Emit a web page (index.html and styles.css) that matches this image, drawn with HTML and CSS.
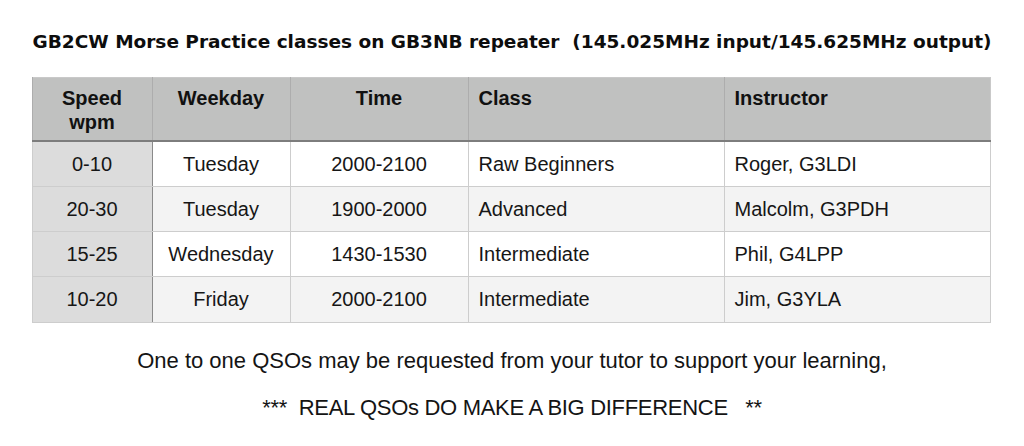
FILE: index.html
```html
<!DOCTYPE html>
<html lang="en">
<head>
<meta charset="utf-8">
<title>GB2CW Morse Practice classes</title>
<link rel="stylesheet" href="styles.css">
</head>
<body>
<main class="page">
  <h1 class="title">GB2CW Morse Practice classes on GB3NB repeater&nbsp; (145.025MHz input/145.625MHz output)</h1>
  <table class="schedule">
    <colgroup>
      <col class="c-speed">
      <col class="c-day">
      <col class="c-time">
      <col class="c-class">
      <col class="c-inst">
    </colgroup>
    <thead>
      <tr>
        <th class="ctr">Speed<br>wpm</th>
        <th class="ctr">Weekday</th>
        <th class="ctr">Time</th>
        <th>Class</th>
        <th>Instructor</th>
      </tr>
    </thead>
    <tbody>
      <tr>
        <td class="speed">0-10</td>
        <td class="ctr">Tuesday</td>
        <td class="ctr">2000-2100</td>
        <td>Raw Beginners</td>
        <td>Roger, G3LDI</td>
      </tr>
      <tr class="alt">
        <td class="speed">20-30</td>
        <td class="ctr">Tuesday</td>
        <td class="ctr">1900-2000</td>
        <td>Advanced</td>
        <td>Malcolm, G3PDH</td>
      </tr>
      <tr>
        <td class="speed">15-25</td>
        <td class="ctr">Wednesday</td>
        <td class="ctr">1430-1530</td>
        <td>Intermediate</td>
        <td>Phil, G4LPP</td>
      </tr>
      <tr class="alt">
        <td class="speed">10-20</td>
        <td class="ctr">Friday</td>
        <td class="ctr">2000-2100</td>
        <td>Intermediate</td>
        <td>Jim, G3YLA</td>
      </tr>
    </tbody>
  </table>
  <p class="note first">One to one QSOs may be requested from your tutor to support your learning,</p>
  <p class="note second">***&nbsp; REAL QSOs DO MAKE A BIG DIFFERENCE &nbsp; **</p>
</main>
</body>
</html>
```

FILE: styles.css
```css
html, body {
  margin: 0;
  padding: 0;
  background: #ffffff;
}

body {
  font-family: "Liberation Sans", Arial, Helvetica, sans-serif;
  color: #161616;
}

.page {
  width: 1024px;
  padding-top: 31px;
  display: flex;
  flex-direction: column;
  align-items: center;
}

.title {
  margin: 0;
  font-family: "DejaVu Sans", "Liberation Sans", sans-serif;
  font-size: 18.5px;
  line-height: 22px;
  font-weight: bold;
  text-align: center;
  color: #0d0d0d;
}

.schedule {
  margin-top: 24px;
  margin-left: -2px;
  width: 958px;
  table-layout: fixed;
  border-collapse: collapse;
  font-size: 20px;
  border: 1px solid #c9c9c9;
}

.c-speed { width: 120px; }
.c-day { width: 138px; }
.c-time { width: 178px; }
.c-class { width: 256px; }
.c-inst { width: 266px; }

.schedule th {
  background: #c0c1c0;
  height: 63px;
  padding: 8px 10px 0;
  vertical-align: top;
  text-align: left;
  font-weight: bold;
  line-height: 24px;
  border-left: 1px solid #adadad;
  border-bottom: 2px solid #7d7d7d;
  box-sizing: border-box;
  color: #111111;
}

.schedule td {
  height: 44px;
  padding: 0 10px;
  vertical-align: middle;
  text-align: left;
  line-height: 22px;
  border: 1px solid #cdcdcd;
}

.schedule tbody tr:last-child td {
  height: 45px;
}

.schedule .ctr {
  text-align: center;
}

.schedule td.speed {
  background: #dcdcdc;
  text-align: center;
  border-right: 1px solid #8a8a8a;
}

.schedule tr.alt td {
  background: #f3f3f3;
}

.schedule tr.alt td.speed {
  background: #dcdcdc;
}

.note {
  margin: 0;
  font-size: 22px;
  line-height: 26px;
  text-align: center;
  color: #141414;
}

.note.first {
  margin-top: 25px;
}

.note.second {
  margin-top: 21px;
  letter-spacing: -0.3px;
}
```
